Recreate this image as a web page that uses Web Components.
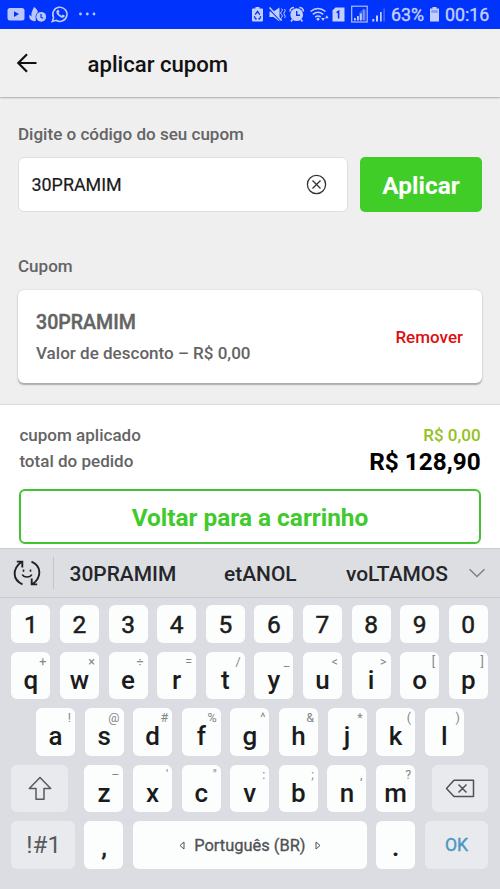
<!DOCTYPE html>
<html lang="pt-BR">
<head>
<meta charset="utf-8">
<title>aplicar cupom</title>
<style>
html,body{margin:0;padding:0}
body{width:500px;height:889px;overflow:hidden;font-family:Roboto,"Liberation Sans",sans-serif;background:#efefef;color:#646464}
</style>
</head>
<body>
<coupon-screen></coupon-screen>
<script>
const define = (name, html, setup) => customElements.define(name, class extends HTMLElement {
  constructor() {
    super();
    const t = document.createElement('template');
    t.innerHTML = '<style>*{box-sizing:border-box}svg{display:block;flex:none}</style>' + html;
    this.attachShadow({mode: 'open'}).appendChild(t.content.cloneNode(true));
  }
  connectedCallback() { if (setup) setup(this, this.shadowRoot); }
});

define('status-bar', `
<style>
:host{display:flex;justify-content:space-between;height:29px;background:#0033fc;color:#c3cefb;flex:none}
.n{font-size:17.8px;line-height:30px;white-space:pre;-webkit-text-stroke:.4px}
.r{display:flex}
</style>
<svg width="110" height="29" viewBox="0 0 110 29" fill="#b9c7fb">
  <rect x="7.5" y="8" width="17" height="12.5" rx="2.5"/><path d="M14 11.3v5.6l5-2.8z" fill="#0033fc"/>
  <path d="M34 7c3 2.200 4.500 4.200 3.600 6.500l-1.600 2.500-.3 5c-4 .8-7.200-2-6.400-6.200l2.200 1.700c-.6-3.500.8-6 2.500-9.500z"/>
  <circle cx="41.200" cy="16.800" r="5.600" fill="#0033fc"/><circle cx="41.200" cy="16.800" r="4.900"/><path d="M41 14v3.300l2.200 1" fill="none" stroke="#0033fc" stroke-width="1.200"/>
  <path d="M52.300 21.500l1.300-3.900a7.100 7.100 0 1 1 2.500 2.700z" fill="none" stroke="#b9c7fb" stroke-width="1.600"/>
  <path d="M57.200 10.200c.7-.7 1.500-.5 1.800.3l.5 1.200-.8 1.200c.7 1.400 1.700 2.200 3 2.800l1-1.100 2 1c.1 1.400-1 2.200-2.300 2.100-3.300-.5-6.300-3.700-6.100-6.200z"/>
  <circle cx="80.500" cy="14" r="1.400"/><circle cx="87.300" cy="14" r="1.400"/><circle cx="94" cy="14" r="1.400"/>
</svg>
<div class="r">
<svg width="141" height="29" viewBox="250 0 141 29" fill="#c3cefb">
  <path d="M255.500 7h4v1.500h2.500q1 0 1 1v11q0 1-1 1h-9q-1 0-1-1v-11q0-1 1-1h2.500z"/>
  <path d="M255.200 14.600l2.300-3.200 2.300 3.200M254.300 16.200l1.200 2.600h1.300M258.300 18.800h1.300l1.200-2.600" stroke="#0033fc" stroke-width="1.300" fill="none"/>
  <path d="M269.500 11.500h4l6-4v14l-6-4.500h-4z"/><path d="M269 8.700l12.500 13" stroke="#0033fc" stroke-width="1.400"/><path d="M269.500 7.500l12 13" stroke="#c3cefb" stroke-width="1.500"/>
  <path d="M281.500 8.500q2 1.500 0 3t0 3t0 3t0 3M284.500 9q1.500 1.500 0 3t0 3t0 3" fill="none" stroke="#c3cefb" stroke-width="1"/>
  <circle cx="296.700" cy="14.700" r="6.400"/><path d="M290 11.500a4 4 0 0 1 4-4M303.400 11.500a4 4 0 0 0-4-4M292.500 19.500l-1.500 2M301 19.500l1.500 2" stroke="#c3cefb" stroke-width="1.600" fill="none"/><path d="M296.700 11v4.300h3.300" fill="none" stroke="#0033fc" stroke-width="1.400"/>
  <path d="M310.500 11.500q7.500-6 15 0M312.800 14.300q5.200-4 10.400 0M315.200 17q2.800-2 5.500 0" fill="none" stroke="#c3cefb" stroke-width="1.600"/><circle cx="318" cy="19.200" r="1.400"/>
  <path d="M321.200 18h3.600l-1.800 3zM325 18.200h3.600l-1.800-3z"/>
  <path d="M335.500 7.500h9v14h-12v-11z"/><path d="M336.600 12.600l2-1.300v7.300" fill="none" stroke="#0033fc" stroke-width="1.600"/>
  <rect x="351.700" y="6.200" width="15.500" height="15.800" fill="none" stroke="#aebcfa" stroke-width="1.200"/>
  <path d="M354 18h1.800v2.500H354zM357 16h1.800v4.500H357zM360 13.500h1.800v7H360z"/><path d="M363 9.500h2.500v11H363z" opacity=".5"/><path d="M359 13l5-5v12h-5z" opacity=".3"/>
  <path d="M372.300 19h2v2.500h-2zM376 15.500h2v6h-2zM380 12h1.700v9.500H380z"/><path d="M383.500 8.500h1.200v13h-1.200z" opacity=".45"/>
</svg>
<span class="n" style="width:38px">63%</span>
<svg width="16" height="29" viewBox="0 0 16 29"><path d="M3.500 7h4v1.500H10v13H1v-13h2.500z" fill="#c3cefb"/><path d="M2.300 10h6.500v3H2.300z" fill="#8d9ff8"/></svg>
<span class="n" style="width:55px">00:16</span>
</div>`);

define('app-header', `
<style>
:host{display:flex;align-items:center;height:68px;flex:none;background:#f0f0f0;padding:0 16px;gap:50.500px;box-shadow:0 1px 1.500px #aaa;color:#111;font-weight:500;font-size:22.150px}
svg{margin-top:0}
span{margin-top:2px;white-space:nowrap}
</style>
<svg width="21" height="20" viewBox="0 0 21 20" fill="none" stroke="#111" stroke-width="2.200"><path d="M20.500 10H2.500M11 1.300L2.300 10l8.700 8.700"/></svg>
<span><slot></slot></span>`);

define('coupon-input', `
<style>
:host{display:flex;align-items:center;justify-content:space-between;width:330px;height:55px;border:1.500px solid #dedede;border-radius:6px;background:#fff;padding:1px 20.500px 0 12.500px;color:#1a1a1a;font-size:17.900px;-webkit-text-stroke:.2px #1a1a1a}
</style>
<slot></slot>
<svg width="21" height="21" viewBox="0 0 21 21" fill="none" stroke="#333" stroke-width="1.300"><circle cx="10.500" cy="10.500" r="9.100"/><path d="M6.500 6.500l8 8M14.500 6.500l-8 8"/></svg>`);

define('app-button', `
<style>
:host{display:flex;align-items:center;justify-content:center;height:55px;border-radius:5px;background:#40cd28;color:#fff;font-weight:700;font-size:24.400px;padding-top:2px;box-sizing:border-box}
:host([outline]){background:#fff;border:2px solid #43c232;color:#40ca2c;border-radius:6px;padding-top:1px}
</style><slot></slot>`);

define('coupon-card', `
<style>
:host{display:flex;justify-content:space-between;align-items:center;width:464px;height:93px;margin-left:-.5px;border-radius:6px;background:#fff;box-shadow:0 2px 1.500px #aaa,0 0 2px #ccc;padding:0 18.500px;box-sizing:border-box;white-space:nowrap}
.c{font-size:19.600px;font-weight:500;-webkit-text-stroke:.4px;line-height:24px}
.v{font-size:17.050px;font-weight:500;line-height:22px;margin-top:7px}
.x{color:#dc1010;font-weight:500;font-size:17px;margin-top:2px}
</style>
<div style="padding-top:3px"><div class="c"><slot name="code"></slot></div><div class="v"><slot name="value"></slot></div></div>
<div class="x"><slot name="action"></slot></div>`);

define('order-summary', `
<style>
:host{display:flex;flex-direction:column;height:144px;flex:none;border-top:1.500px solid #dadada;background:#fff;padding:17px 19.400px 0;box-sizing:border-box}
.l{display:flex;justify-content:space-between;align-items:center;height:26px;font-size:17.050px;font-weight:500;white-space:nowrap}
.g{color:#93c11e;font-size:17px}
.t{color:#000;font-weight:700;font-size:24.350px}
app-button{margin-top:15px}
</style>
<div class="l"><span>cupom aplicado</span><span class="g">R$ 0,00</span></div>
<div class="l"><span>total do pedido</span><span class="t">R$ 128,90</span></div>
<app-button outline>Voltar para a carrinho</app-button>`);

define('suggestion-bar', `
<style>
:host{display:flex;align-items:center;height:50px;flex:none;background:#dddee2;border-top:1px solid #cbccd0;border-bottom:1.500px solid #c9cace;box-sizing:border-box;color:#25262a;font-size:20.950px;font-weight:500;white-space:nowrap}
i{width:1px;height:32px;background:#c4c5ca;margin-left:12px}
svg{margin-left:13px}
span{padding-top:2px}
</style>
<svg width="28" height="28" viewBox="0 0 28 28" fill="none" stroke="#202124" stroke-width="1.900"><path d="M9.500 25.300C-.5 21-1 10 8.300 3M3.800 2.600h5.500v6M18.500 2.700C28.500 7 29 18 19.700 25M24.200 25.400h-5.500v-6"/><path d="M9.300 15.500c1.500 3.400 8 3.400 9.500 0M10.500 10.500v2.300M17.500 10.500v2.300" stroke-width="1.600"/></svg>
<i></i><span style="margin-left:15.500px;width:154.500px">30PRAMIM</span><span style="width:122px">etANOL</span><span style="width:108px">voLTAMOS</span>
<svg width="18" height="12" viewBox="0 0 18 12" fill="none" stroke="#808186" stroke-width="1.500" style="margin-left:14px"><path d="M1.500 2.300L9 9.500l7.500-7.200"/></svg>`);

define('kb-key', `
<style>
:host{position:relative;display:flex;align-items:center;justify-content:center;width:39px;height:47.500px;border-radius:6px;background:#fcfdfd;color:#1b1b1c;font-size:26px;font-weight:500;line-height:30px;flex:none;box-sizing:border-box;padding-top:8px}
:host([num]){height:37.500px;font-size:24.500px;padding-top:1px;font-weight:400;-webkit-text-stroke:.5px}
:host([fn]){background:#e9eaee;padding:0;font-weight:400}
b{position:absolute;right:4px;top:2px;font-weight:400;font-size:12.500px;line-height:15px;color:#85868a}
</style><slot></slot><b></b>`, (h, r) => { const b = r.querySelector('b'); if (h.getAttribute('alt')) b.textContent = h.getAttribute('alt'); else b.remove(); });

const keys = (s, alts) => [...s].map((c, i) => `<kb-key alt="${alts[i].replace('"', '&quot;')}">${c}</kb-key>`).join('');

define('soft-keyboard', `
<style>
:host{display:flex;flex-direction:column;gap:9px;height:291px;flex:none;background:#dcdde2;padding:7.300px 0 0 11.400px;box-sizing:border-box}
.row{display:flex;gap:9.600px}
.sp{font-size:16.450px;font-weight:400;color:#505154;gap:9.500px;-webkit-text-stroke:.3px}
</style>
<div class="row">${[...'1234567890'].map(c => `<kb-key num>${c}</kb-key>`).join('')}</div>
<div class="row">${keys('qwertyuiop', ['+','×','÷','=','/','_','<','>','[',']'])}</div>
<div class="row" style="padding-left:24.600px">${keys('asdfghjkl', ['!','@','#','%','^','&amp;','*','(',')'])}</div>
<div class="row"><kb-key fn style="width:56.500px;margin-right:7px"><svg width="24" height="25" viewBox="0 0 24 25" fill="none" stroke="#58595d" stroke-width="1.500" stroke-linejoin="round"><path d="M12 1.500L1.300 12.500H8v10.800h8V12.500h6.700z"/></svg></kb-key>${keys('zxcvbnm', ['–',"'",'"',':',';',',','?'])}<kb-key fn style="width:56.500px;margin-left:7px"><svg width="30" height="19" viewBox="0 0 30 19" fill="none" stroke="#505154" stroke-width="1.500" stroke-linejoin="round"><path d="M9 1.200h19.500v16.300H9L1.500 9.400zM13.500 5.500l8 8M21.500 5.500l-8 8"/></svg></kb-key></div>
<div class="row"><kb-key fn style="width:63.500px;font-size:24.200px;color:#58595d;padding-left:1px">!#1</kb-key><kb-key style="padding-top:3px;font-weight:400;-webkit-text-stroke:.5px">,</kb-key><kb-key class="sp" style="width:233.500px;padding:1px 0 0"><svg width="6" height="9" viewBox="0 0 6 9" fill="none" stroke="#505154"><path d="M5 1v7L1 4.500z"/></svg>Português (BR)<svg width="6" height="9" viewBox="0 0 6 9" fill="none" stroke="#505154"><path d="M1 1v7l4-3.500z"/></svg></kb-key><kb-key style="font-size:28px;padding-top:4px">.</kb-key><kb-key fn style="width:63.500px;font-size:17.600px;color:#4c97bf;-webkit-text-stroke:.4px">OK</kb-key></div>`);

define('coupon-screen', `
<style>
:host{display:flex;flex-direction:column;width:500px;height:889px;background:#efefef}
main{display:flex;flex-direction:column;height:307px;flex:none;padding:25px 18px 0}
label{font-size:17.050px;font-weight:500;line-height:24px;white-space:nowrap}
.row{display:flex;gap:12px;margin:10.500px 0 42.500px}
.row app-button{width:122px}
coupon-card{margin-top:11.500px}
app-header{z-index:1}
</style>
<status-bar></status-bar>
<app-header>aplicar cupom</app-header>
<main>
<label>Digite o código do seu cupom</label>
<div class="row"><coupon-input>30PRAMIM</coupon-input><app-button>Aplicar</app-button></div>
<label>Cupom</label>
<coupon-card><span slot="code">30PRAMIM</span><span slot="value">Valor de desconto – R$ 0,00</span><span slot="action">Remover</span></coupon-card>
</main>
<order-summary></order-summary>
<suggestion-bar></suggestion-bar>
<soft-keyboard></soft-keyboard>`);
</script>
</body>
</html>
